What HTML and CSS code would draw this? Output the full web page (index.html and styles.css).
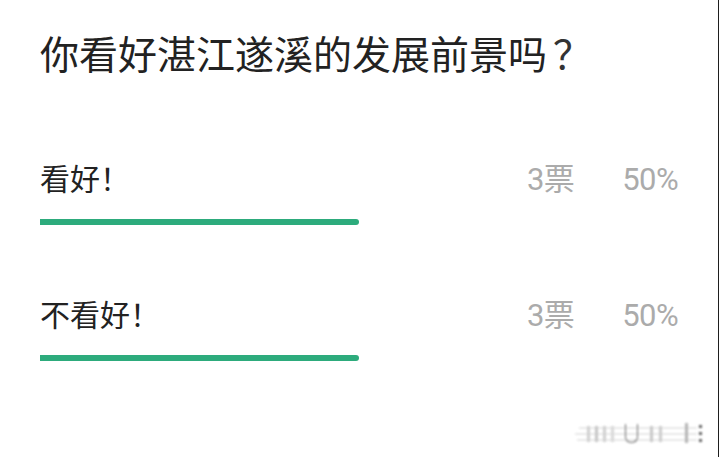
FILE: index.html
```html
<!DOCTYPE html>
<html lang="zh-CN">
<head>
<meta charset="utf-8">
<title>投票</title>
<link rel="stylesheet" href="styles.css">
</head>
<body>
<div class="page">
  <h1 class="title">你看好湛江遂溪的发展前景吗<span class="punct">？</span></h1>
  <div class="options">
    <div class="option">
      <div class="row">
        <span class="label">看好！</span>
        <span class="count">3票</span>
        <span class="pct">50%</span>
      </div>
      <div class="track"><div class="bar" style="width:50%"></div></div>
    </div>
    <div class="option">
      <div class="row">
        <span class="label">不看好！</span>
        <span class="count">3票</span>
        <span class="pct">50%</span>
      </div>
      <div class="track"><div class="bar" style="width:50%"></div></div>
    </div>
  </div>
  <div class="watermark" aria-hidden="true">
    <span class="wm-line l1"></span>
    <span class="wm-line l2"></span>
    <span class="wm-line l3"></span>
    <span class="wm-stroke s1"></span>
    <span class="wm-stroke s2"></span>
    <span class="wm-stroke s3"></span>
    <span class="wm-stroke s4"></span>
    <span class="wm-u"></span>
    <span class="wm-stroke s5"></span>
    <span class="wm-stroke s6"></span>
    <span class="wm-stroke s7"></span>
    <span class="wm-dot d1"></span>
    <span class="wm-dot d2"></span>
    <span class="wm-dot d3"></span>
  </div>
</div>
</body>
</html>
```
FILE: styles.css
```css
html, body {
  margin: 0;
  padding: 0;
  background: #ffffff;
}
body {
  font-family: Roboto, "Noto Sans CJK SC", "Noto Sans", sans-serif;
  color: #222222;
}
.page {
  position: relative;
  width: 719px;
  height: 457px;
  border-right: 1px solid #1e1e1e;
  box-sizing: border-box;
  padding: 27px 40px 0 40px;
  overflow: hidden;
}
.title {
  margin: 0;
  font-family: "Noto Sans CJK SC", sans-serif;
  font-weight: 400;
  font-size: 39px;
  line-height: 50px;
  color: #222222;
  white-space: nowrap;
}
.punct {
  font-family: "Noto Sans CJK TC", "Noto Sans CJK SC", sans-serif;
  margin-left: 6px;
  color: #333333;
}
.options {
  display: flex;
  flex-direction: column;
  gap: 68px;
  margin-top: 80px;
  width: 638px;
}
.option {
  display: flex;
  flex-direction: column;
  gap: 22px;
}
.row {
  display: flex;
  align-items: baseline;
  height: 40px;
}
.label {
  flex: 1;
  font-family: "Noto Sans CJK SC", sans-serif;
  font-size: 30px;
  line-height: 40px;
  color: #222222;
}
.count, .pct {
  font-size: 31px;
  line-height: 40px;
  color: #ababab;
  letter-spacing: -0.6px;
}
.count {
  margin-right: 48px;
}
.track {
  width: 100%;
  height: 6px;
}
.bar {
  height: 6px;
  background: #2dab7c;
  border-radius: 0 3px 3px 0;
}
.watermark {
  position: absolute;
  left: 575px;
  top: 420px;
  width: 130px;
  height: 28px;
  filter: blur(1px);
  opacity: 0.85;
}
.wm-line {
  position: absolute;
  left: 0;
  height: 2px;
  background: #e4e4e4;
}
.l1 { top: 7px; width: 118px; left: 4px; }
.l2 { top: 13px; width: 122px; }
.l3 { top: 19px; width: 120px; left: 2px; }
.wm-stroke {
  position: absolute;
  width: 3px;
  background: #c8c8c8;
}
.s1 { left: 12px; top: 6px; height: 16px; }
.s2 { left: 20px; top: 6px; height: 16px; background: #bdbdbd; }
.s3 { left: 28px; top: 6px; height: 16px; }
.s4 { left: 36px; top: 6px; height: 16px; background: #d2d2d2; }
.s5 { left: 75px; top: 6px; height: 16px; background: #bfbfbf; }
.s6 { left: 84px; top: 6px; height: 16px; background: #c4c4c4; }
.s7 { left: 110px; top: 3px; height: 20px; background: #a8a8a8; }
.wm-u {
  position: absolute;
  left: 50px;
  top: 4px;
  width: 11px;
  height: 18px;
  border: 1.5px solid #555;
  border-top: none;
  border-radius: 0 0 6px 6px;
}
.wm-dot {
  position: absolute;
  left: 124px;
  width: 3px;
  height: 3px;
  background: #444;
}
.d1 { top: 5px; }
.d2 { top: 12px; }
.d3 { top: 19px; }
```
